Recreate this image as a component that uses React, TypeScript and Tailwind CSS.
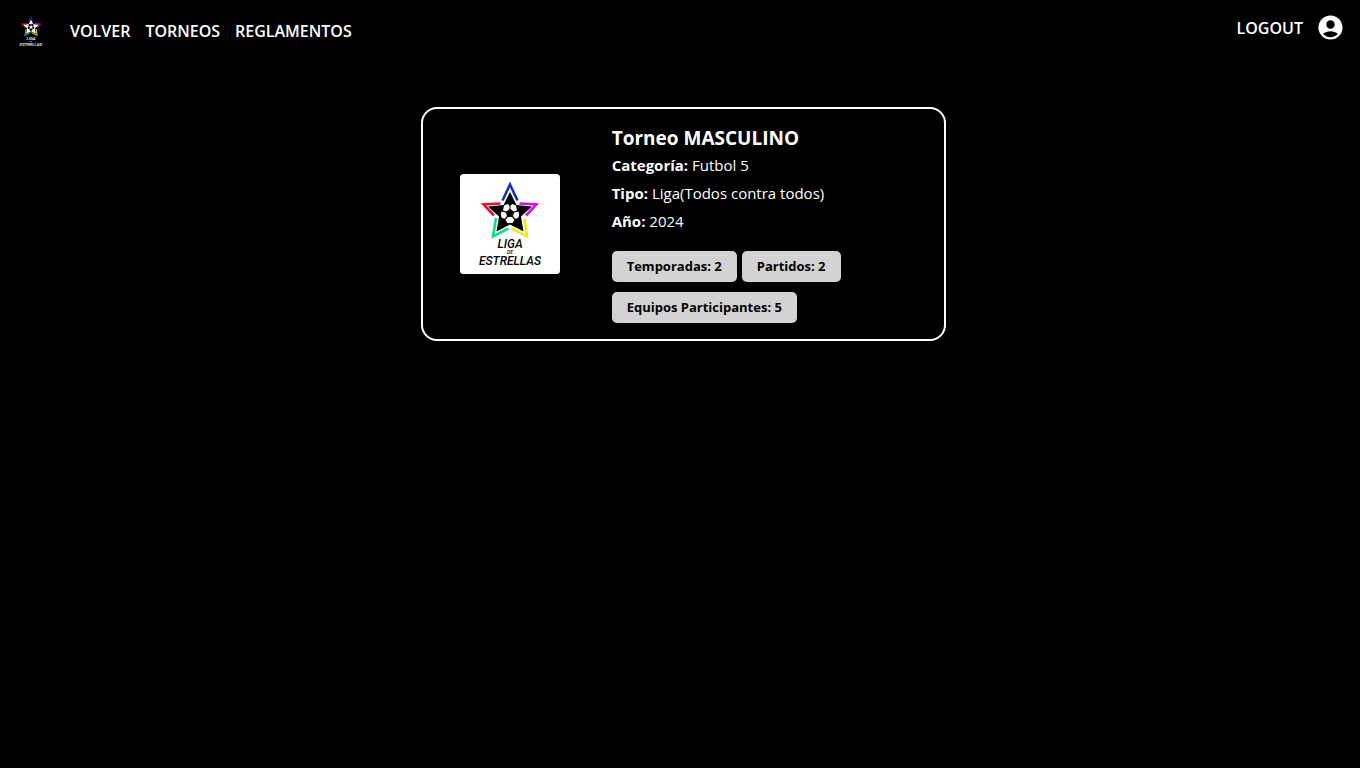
type LogoProps = { className: string; ink: string; paper: string };

function Logo({ className, ink, paper }: LogoProps) {
  return (
    <svg viewBox="0 0 100 100" className={className} role="img" aria-label="Liga de Estrellas">
      <rect width="100" height="100" rx="3.5" fill={paper} />
      <g fill="none" strokeWidth="2.6">
        <path d="M42.5 26.5 50 10.5 57.5 26.5" stroke="#1432b4" />
        <path d="M59.5 29.5 76.5 30.5 66 41.5" stroke="#d60fe6" />
        <path d="M64.5 44.5 67 62.5 51.5 54.5" stroke="#f5e61e" />
        <path d="M36 44 33 62.5 48.5 54.5" stroke="#14dc82" />
        <path d="M40.5 29.5 23.5 30.5 34 41.5" stroke="#dc1432" />
      </g>
      <path d="M50 18 56.5 31 72 32.5 61 42.5 63.5 57.5 50 50.5 36.5 57.5 39 42.5 28 32.5 43.5 31Z" fill={ink} />
      <g fill={paper}>
        <path d="M44 31.5 47.5 30 49.5 31.5V35L46.5 37.5 43 36.500Z" />
        <path d="M56 31.500 52.500 30 50.500 31.500V35L53.500 37.500 57 36.500Z" />
        <path d="M41.500 37.500 45.800 38.500 47 42 44.500 45 41.500 43.500 40.800 40Z" />
        <path d="M58.500 37.500 54.200 38.500 53 42 55.500 45 58.500 43.500 59.200 40Z" />
        <path d="M47.800 43H52.200L54.500 46 52.500 49H47.500L45.500 46Z" />
      </g>
      <g fill={ink} textAnchor="middle" fontFamily="Roboto, sans-serif" fontStyle="italic">
        <text x="50" y="74" fontSize="12" fontWeight="500">LIGA</text>
        <text x="50" y="80" fontSize="5" fontWeight="500">DE</text>
        <text x="50" y="90.5" fontSize="12" fontWeight="500">ESTRELLAS</text>
      </g>
    </svg>
  );
}

function AccountIcon() {
  return (
    <svg viewBox="0 0 24 24" className="size-[29px]" fill="currentColor" aria-hidden="true">
      <path d="M12 2C6.48 2 2 6.48 2 12s4.48 10 10 10 10-4.48 10-10S17.52 2 12 2zm0 4c1.93 0 3.5 1.57 3.5 3.5S13.93 13 12 13s-3.5-1.57-3.5-3.5S10.07 6 12 6zm0 14c-2.03 0-4.43-.82-6.14-2.88C7.55 15.8 9.68 15 12 15s4.45.8 6.14 2.12C16.43 19.18 14.03 20 12 20z" />
    </svg>
  );
}

const links = ["VOLVER", "TORNEOS", "REGLAMENTOS"];

const details = [
  { label: "Categoría:", value: "Futbol 5" },
  { label: "Tipo:", value: "Liga(Todos contra todos)" },
  { label: "Año:", value: "2024" },
];

const stats = ["Temporadas: 2", "Partidos: 2", "Equipos Participantes: 5"];

export default function App() {
  return (
    <div className="min-h-screen bg-black font-['Open_Sans','Noto_Sans',sans-serif] text-white">
      <header className="flex items-start justify-between pt-[13px] pr-[15px] pl-[13px] text-base leading-6 font-semibold">
        <nav className="flex items-center gap-[15px]">
          <a href="#inicio" className="mr-[6px]">
            <Logo className="size-9" ink="#ffffff" paper="#000000" />
          </a>
          {links.map((link) => (
            <a key={link} href={"#" + link.toLowerCase()}>{link}</a>
          ))}
        </nav>
        <div className="flex items-center gap-[13px]">
          <button type="button">LOGOUT</button>
          <a href="#perfil" aria-label="Perfil">
            <AccountIcon />
          </a>
        </div>
      </header>
      <main className="flex justify-center pt-[58px] pl-[7px]">
        <article className="flex w-full max-w-[525px] items-center rounded-2xl border-2 border-white py-4">
          <div className="flex w-1/3 justify-center">
            <Logo className="size-[100px]" ink="#000000" paper="#ffffff" />
          </div>
          <div className="w-2/3 px-[15px]">
            <h1 className="text-[19px] leading-[26px] font-bold">Torneo MASCULINO</h1>
            <div className="mt-[2px] flex flex-col gap-1">
              {details.map(({ label, value }) => (
                <p key={label} className="text-[15px] leading-6">
                  <strong>{label}</strong> {value}
                </p>
              ))}
            </div>
            <div className="mt-[18px] flex flex-wrap gap-x-[5px] gap-y-[10px]">
              {stats.map((stat) => (
                <button
                  key={stat}
                  type="button"
                  className="rounded-[5px] bg-[#d3d3d3] px-[15px] py-[5px] text-[13px] leading-[21px] font-bold text-black"
                >
                  {stat}
                </button>
              ))}
            </div>
          </div>
        </article>
      </main>
    </div>
  );
}
